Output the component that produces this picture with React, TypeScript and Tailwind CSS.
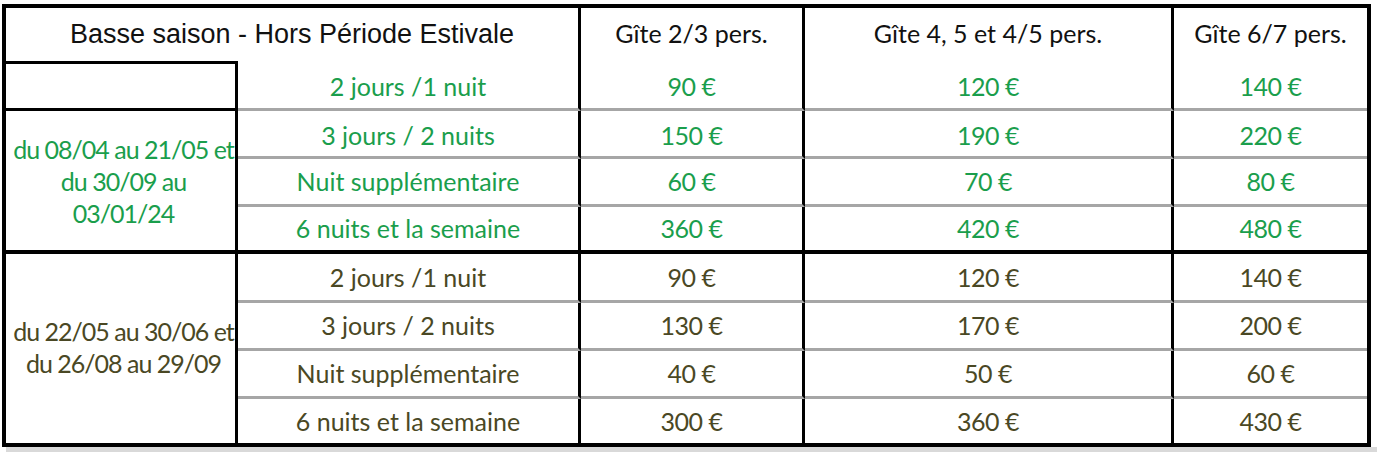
import React from "react";

const GREEN = "text-[#1a9e4c]";
const OLIVE = "text-[#4a4824]";
const CAL = "font-['Lato','Open_Sans',sans-serif] text-[25px]";

const periods = ["2 jours /1 nuit", "3 jours / 2 nuits", "Nuit supplémentaire", "6 nuits et la semaine"];
const high = [
  ["90 €", "120 €", "140 €"],
  ["150 €", "190 €", "220 €"],
  ["60 €", "70 €", "80 €"],
  ["360 €", "420 €", "480 €"],
];
const low = [
  ["90 €", "120 €", "140 €"],
  ["130 €", "170 €", "200 €"],
  ["40 €", "50 €", "60 €"],
  ["300 €", "360 €", "430 €"],
];

function Cell({ className, children }: { className: string; children?: React.ReactNode }) {
  return <div className={"flex items-center justify-center leading-none whitespace-nowrap " + className}>{children}</div>;
}

export default function App() {
  const rowStarts = ["row-start-2", "row-start-3", "row-start-4", "row-start-5"];
  const lowRowStarts = ["row-start-6", "row-start-7", "row-start-8", "row-start-9"];
  const colStarts = ["col-start-3", "col-start-4", "col-start-5"];
  return (
    <div className="w-[1377px] h-[452px] bg-white pl-[2px] pt-[4px]">
      <div className="w-[1369px] border-4 border-black bg-white">
        <div className="grid grid-cols-[232px_343px_224px_369px_193px] grid-rows-[53px_50px_48px_48px_47px_49px_48px_48px_44px]">
          {/* title */}
          <Cell className="col-start-1 col-span-2 row-start-1 border-r-[3px] border-black font-['Liberation_Sans',Arial,sans-serif] text-[27px] text-[#111]">
            Basse saison - Hors Période Estivale
          </Cell>
          {/* empty box */}
          <div className="col-start-1 row-start-2 border-t-[3px] border-r-[3px] border-b-[3px] border-black" />
          {/* headers */}
          {["Gîte 2/3 pers.", "Gîte 4, 5 et 4/5 pers.", "Gîte 6/7 pers."].map((h, i) => (
            <Cell
              key={h}
              className={`${colStarts[i]} row-start-1 ${i < 2 ? "border-r-[3px] border-black" : ""} ${CAL} text-[#111] pb-[2px]`}
            >
              {h}
            </Cell>
          ))}
          {/* high season rows (rows 2..5) */}
          {periods.map((p, r) => {
            const rs = rowStarts[r];
            const last = r === 3;
            const bb = last ? "border-b-4 border-b-black" : "border-b-[3px] border-b-[#a6a6a6]";
            const pt = r === 0 ? "pt-[4px]" : r === 1 ? "pt-[3px]" : "";
            return (
              <React.Fragment key={"h" + r}>
                <Cell className={`col-start-2 ${rs} border-r-[3px] border-r-black ${bb} ${pt} ${CAL} ${GREEN}`}>{p}</Cell>
                {high[r].map((v, c) => (
                  <Cell
                    key={c}
                    className={`${colStarts[c]} ${rs} ${c < 2 ? "border-r-[3px] border-r-black" : ""} ${bb} ${pt} ${CAL} ${GREEN} tracking-[-0.5px]`}
                  >
                    {v}
                  </Cell>
                ))}
              </React.Fragment>
            );
          })}
          <div
            className={`col-start-1 row-start-3 row-span-3 border-r-[3px] border-r-black border-b-4 border-b-black flex flex-col items-center justify-center text-center leading-[32px] tracking-[-1px] ${CAL} ${GREEN} pl-[6px]`}
          >
            <span className="whitespace-nowrap">du 08/04 au 21/05 et</span>
            <span>du 30/09 au</span>
            <span>03/01/24</span>
          </div>
          {/* low season rows */}
          {periods.map((p, r) => {
            const rs = lowRowStarts[r];
            const last = r === 3;
            const bb = last ? "" : "border-b-[3px] border-b-[#a6a6a6]";
            return (
              <React.Fragment key={"l" + r}>
                <Cell className={`col-start-2 ${rs} border-r-[3px] border-r-black ${bb} ${CAL} ${OLIVE}`}>{p}</Cell>
                {low[r].map((v, c) => (
                  <Cell
                    key={c}
                    className={`${colStarts[c]} ${rs} ${c < 2 ? "border-r-[3px] border-r-black" : ""} ${bb} ${CAL} ${OLIVE} tracking-[-0.5px]`}
                  >
                    {v}
                  </Cell>
                ))}
              </React.Fragment>
            );
          })}
          <div
            className={`col-start-1 row-start-6 row-span-4 border-r-[3px] border-r-black flex flex-col items-center justify-center text-center leading-[32px] tracking-[-1px] ${CAL} ${OLIVE} pl-[6px] pb-[4px]`}
          >
            <span className="whitespace-nowrap">du 22/05 au 30/06 et</span>
            <span className="whitespace-nowrap">du 26/08 au 29/09</span>
          </div>
        </div>
      </div>
      <div className="ml-[4px] h-[5px] bg-[#d9d9d9]" />
    </div>
  );
}
